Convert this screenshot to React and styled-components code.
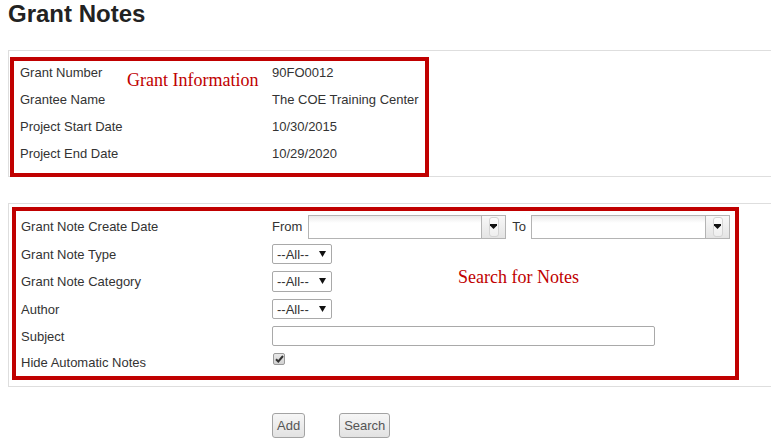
import styled, { createGlobalStyle } from 'styled-components';

const GlobalStyle = createGlobalStyle`
    html, body {
        margin: 0;
        padding: 0;
        background: #fff;
    }
    body {
        font-family: 'Liberation Sans', Arial, sans-serif;
        font-size: 13px;
        color: #333;
    }
`;

const Page = styled.div`
    padding-left: 8px;
`;

const Title = styled.h1`
    margin: 0;
    padding-top: 1px;
    font-size: 24px;
    line-height: 26px;
    font-weight: bold;
    color: #222;
`;

const Panel = styled.div`
    margin-top: ${p => p.$top}px;
    border: 1px solid #dedede;
    border-right: none;
    padding-bottom: ${p => p.$bottom}px;
`;

const Highlight = styled.div`
    position: relative;
    box-sizing: border-box;
    width: ${p => p.$width}px;
    margin: ${p => p.$mt}px 0 ${p => p.$mb}px ${p => p.$ml}px;
    border: 4px solid #c00000;
    padding: 0 0 ${p => p.$pb}px ${p => p.$pl}px;
`;

const Note = styled.span`
    position: absolute;
    left: ${p => p.$x}px;
    top: ${p => p.$y}px;
    font-family: 'Liberation Serif', 'Times New Roman', serif;
    font-size: 18px;
    line-height: 18px;
    color: #c00000;
    white-space: nowrap;
`;

const InfoGrid = styled.div`
    display: grid;
    grid-template-columns: 252px auto;
    grid-auto-rows: 22px;
    row-gap: 5px;
    align-items: center;
`;

const Row = styled.div`
    display: grid;
    grid-template-columns: 251px 1fr;
    align-items: center;
    height: ${p => p.$h}px;
`;

const Label = styled.span`
    white-space: nowrap;
`;

const Controls = styled.div`
    display: flex;
    align-items: center;
    align-self: ${p => (p.$top ? 'start' : 'center')};
    padding-top: ${p => p.$pt || 0}px;
`;

const Word = styled.span`
    margin-right: ${p => p.$gap}px;
`;

const DateField = styled.div`
    display: flex;
    box-sizing: border-box;
    width: ${p => p.$w}px;
    height: 24px;
    margin-right: ${p => p.$gap || 0}px;
    border: 1px solid #b4b4b4;
    background: linear-gradient(#eaeaea, #fff 7px);
`;

const DateInput = styled.input`
    flex: 1;
    min-width: 0;
    border: 0;
    outline: none;
    background: transparent;
    font: inherit;
`;

const PickerButton = styled.span`
    display: flex;
    align-items: center;
    justify-content: center;
    width: 23px;
    border-left: 1px solid #b4b4b4;
    background: linear-gradient(#f8f8f8, #e4e4e4);
`;

const PickerKnob = styled.span`
    display: flex;
    align-items: center;
    justify-content: center;
    box-sizing: border-box;
    width: 10px;
    height: 20px;
    border: 1px solid #d4d4d4;
    border-radius: 3px;
    background: linear-gradient(#fdfdfd, #eeeeee);
`;

const SelectWrap = styled.span`
    position: relative;
    display: inline-flex;
`;

const Select = styled.select`
    appearance: none;
    box-sizing: border-box;
    width: 60px;
    height: ${p => p.$h}px;
    padding: 0 0 0 4px;
    border: 1px solid #a9a9a9;
    border-radius: 2px;
    background: #fff;
    font: inherit;
    color: #333;
    outline: none;
`;

const SelectArrow = styled.svg`
    position: absolute;
    right: 6px;
    top: 50%;
    margin-top: -3px;
    pointer-events: none;
`;

const TextBox = styled.input`
    box-sizing: border-box;
    width: 383px;
    height: 20px;
    border: 1px solid #a9a9a9;
    border-radius: 2px;
    font: inherit;
    outline: none;
`;

const CheckBox = styled.span`
    display: flex;
    align-items: center;
    justify-content: center;
    box-sizing: border-box;
    width: 12px;
    height: 12px;
    margin-left: 1px;
    border: 1px solid #9a9a9a;
    border-radius: 2px;
    background: linear-gradient(#e8e8e8, #d2d2d2);
`;

const ButtonBar = styled.div`
    display: flex;
    gap: 34px;
    margin-top: 26px;
    padding-left: 264px;
`;

const Button = styled.button`
    height: 25px;
    padding: 0 4px;
    border: 1px solid #a3a3a3;
    border-radius: 3px;
    background: linear-gradient(#f6f6f6, #e2e2e2);
    font-family: 'Liberation Sans', Arial, sans-serif;
    font-size: 13px;
    color: #555;
`;

function DownArrow() {
    return (
        <svg width="7" height="5" viewBox="0 0 7 5">
            <path d="M0 0h7v1.4L3.5 5 0 1.4z" fill="#111" />
        </svg>
    );
}

function DatePicker({ width, gap }) {
    return (
        <DateField $w={width} $gap={gap}>
            <DateInput type="text" />
            <PickerButton>
                <PickerKnob>
                    <DownArrow />
                </PickerKnob>
            </PickerButton>
        </DateField>
    );
}

function AllSelect({ height }) {
    return (
        <SelectWrap>
            <Select $h={height} defaultValue="all">
                <option value="all">--All--</option>
            </Select>
            <SelectArrow width="7" height="6" viewBox="0 0 7 6">
                <path d="M0 0h7L3.5 6z" fill="#111" />
            </SelectArrow>
        </SelectWrap>
    );
}

const info = [
    ['Grant Number', '90FO0012'],
    ['Grantee Name', 'The COE Training Center'],
    ['Project Start Date', '10/30/2015'],
    ['Project End Date', '10/29/2020'],
];

export default function App() {
    return (
        <Page>
            <GlobalStyle />
            <Title>Grant Notes</Title>

            <Panel $top={23} $bottom={0}>
                <Highlight $width={419} $mt={6} $mb={-1} $ml={1} $pl={6} $pb={9}>
                    <InfoGrid>
                        {info.map(([label, value]) => [
                            <Label key={label}>{label}</Label>,
                            <span key={label + '-value'}>{value}</span>,
                        ])}
                    </InfoGrid>
                    <Note $x={113} $y={10}>Grant Information</Note>
                </Highlight>
            </Panel>

            <Panel $top={26} $bottom={6}>
                <Highlight $width={727} $mt={3} $mb={0} $ml={3} $pl={5} $pb={0}>
                    <Row $h={30}>
                        <Label>Grant Note Create Date</Label>
                        <Controls $pt={1}>
                            <Word $gap={6}>From</Word>
                            <DatePicker width={198} gap={6} />
                            <Word $gap={5}>To</Word>
                            <DatePicker width={199} />
                        </Controls>
                    </Row>
                    <Row $h={26}>
                        <Label>Grant Note Type</Label>
                        <Controls><AllSelect height={20} /></Controls>
                    </Row>
                    <Row $h={28}>
                        <Label>Grant Note Category</Label>
                        <Controls><AllSelect height={21} /></Controls>
                    </Row>
                    <Row $h={28}>
                        <Label>Author</Label>
                        <Controls><AllSelect height={20} /></Controls>
                    </Row>
                    <Row $h={26}>
                        <Label>Subject</Label>
                        <Controls><TextBox type="text" /></Controls>
                    </Row>
                    <Row $h={27}>
                        <Label>Hide Automatic Notes</Label>
                        <Controls $top $pt={4}>
                            <CheckBox>
                                <svg width="9" height="8" viewBox="0 0 9 8">
                                    <path d="M1 4.2 3.3 6.5 8 1" fill="none" stroke="#333" strokeWidth="2" />
                                </svg>
                            </CheckBox>
                        </Controls>
                    </Row>
                    <Note $x={442} $y={57}>Search for Notes</Note>
                </Highlight>
            </Panel>

            <ButtonBar>
                <Button>Add</Button>
                <Button>Search</Button>
            </ButtonBar>
        </Page>
    );
}
